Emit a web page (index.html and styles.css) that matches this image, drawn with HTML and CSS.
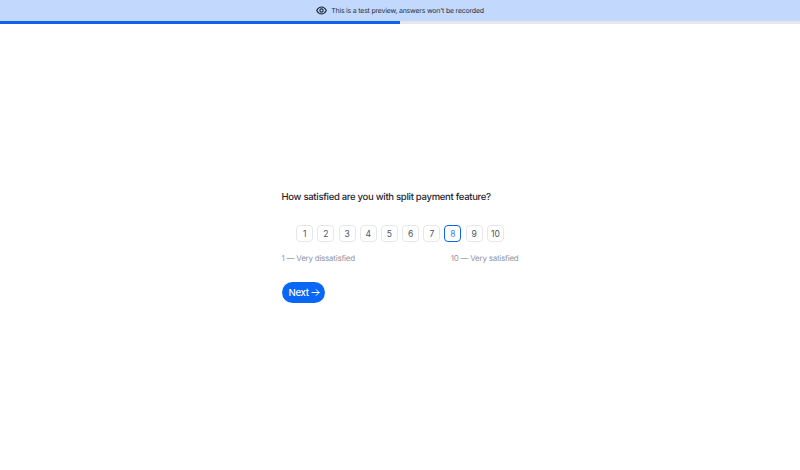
FILE: index.html
```html
<!DOCTYPE html>
<html>
  <head>
    <title>Survey Preview</title>
    <link rel="stylesheet" href="styles.css">
  </head>
  <body>
    <!-- Preview banner -->
    <div class="banner">
      <svg class="eye" width="12" height="12" viewBox="0 0 24 24" fill="none" stroke="#1f2937" stroke-width="2.4" stroke-linecap="round" stroke-linejoin="round">
        <path d="M1.5 12s4-7.5 10.5-7.5S22.5 12 22.5 12s-4 7.500-10.500 7.500S1.500 12 1.500 12z"></path>
        <circle cx="12" cy="12" r="3.6"></circle>
      </svg>
      <span>This is a test preview, answers won't be recorded</span>
    </div>
    <div class="progress-track">
      <div class="progress" style="width: 50%"></div>
    </div>

    <!-- Question -->
    <main class="page">
      <div class="survey">
        <h2>How satisfied are you with split payment feature?</h2>
        <div class="scale">
          <button class="choice">1</button>
          <button class="choice">2</button>
          <button class="choice">3</button>
          <button class="choice">4</button>
          <button class="choice">5</button>
          <button class="choice">6</button>
          <button class="choice">7</button>
          <button class="choice selected">8</button>
          <button class="choice">9</button>
          <button class="choice">10</button>
        </div>
        <div class="legend">
          <span>1 — Very dissatisfied</span>
          <span>10 — Very satisfied</span>
        </div>
        <button class="next">
          Next
          <svg width="9" height="9" viewBox="0 0 10 10" fill="none" stroke="#fff" stroke-width="1.1" stroke-linecap="round" stroke-linejoin="round">
            <path d="M1 5h8M5.800 1.800 9 5 5.800 8.200"></path>
          </svg>
        </button>
      </div>
    </main>
  </body>
</html>
```

FILE: styles.css
```css
* {
  box-sizing: border-box;
}

body {
  font-family: Inter, "Liberation Sans", sans-serif;
  text-rendering: geometricPrecision;
  background-color: #fff;
  margin: 0;
  height: 470px;
  overflow: hidden;
  display: flex;
  flex-direction: column;
}

/* Preview banner */
.banner {
  height: 21px;
  background-color: #c2d9fd;
  display: flex;
  justify-content: center;
  align-items: center;
  gap: 4px;
  font-size: 7px;
  letter-spacing: -0.22px;
  color: #273142;
}

.eye {
  width: 11px;
  height: 11px;
}

.progress-track {
  height: 3px;
  background-color: #e5e7eb;
}

.progress {
  height: 100%;
  background-color: #0f62f0;
}

/* Question */
.page {
  flex: 1;
  display: flex;
  justify-content: center;
  padding-top: 167px;
}

.survey {
  width: 237px;
}

h2 {
  margin: 0;
  font-size: 9.5px;
  line-height: 14px;
  letter-spacing: -0.29px;
  font-weight: 500;
  color: #1f2430;
}

.scale {
  display: flex;
  justify-content: center;
  gap: 4.2px;
  margin-top: 20px;
}

.choice {
  width: 17px;
  height: 17px;
  padding: 0;
  font-family: inherit;
  font-size: 8.5px;
  color: #4b5563;
  background-color: #fff;
  border: 1px solid #e5e7eb;
  border-radius: 4px;
}

.choice.selected {
  color: #3b7df5;
  border: 1.5px solid #0f62f0;
}

.legend {
  display: flex;
  justify-content: space-between;
  margin-top: 10px;
  font-size: 8px;
  letter-spacing: -0.24px;
  line-height: 12px;
  color: #8f95a1;
}

.next {
  display: flex;
  align-items: center;
  gap: 2px;
  margin-top: 18px;
  height: 21px;
  padding: 0 5px 0 7px;
  font-family: inherit;
  font-size: 9.6px;
  letter-spacing: -0.3px;
  font-weight: 500;
  color: #fff;
  background-color: #0a66f5;
  border: none;
  border-radius: 11px;
}
```
